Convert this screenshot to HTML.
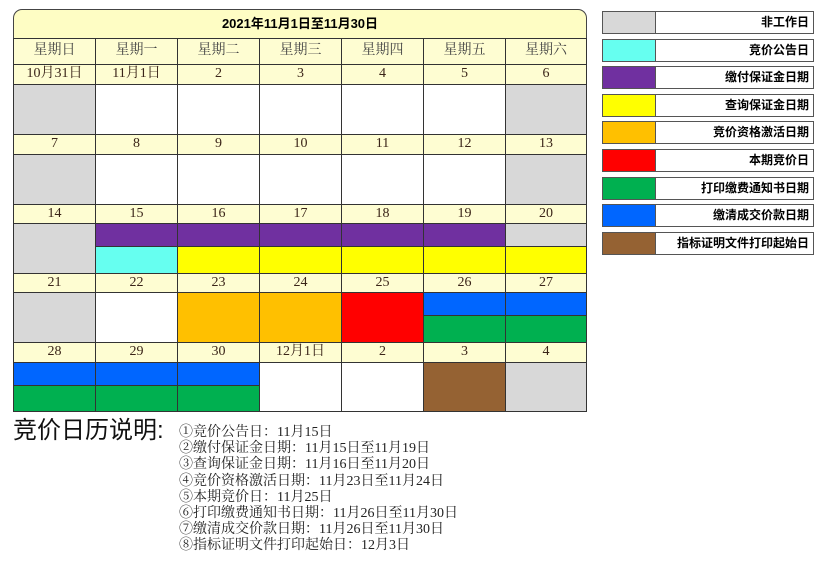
<!DOCTYPE html>
<html><head><meta charset="utf-8"><style>
body{margin:0;width:829px;height:568px;background:#fff;position:relative;overflow:hidden;font-family:"Liberation Serif","Noto Serif CJK SC",serif;}
.c{position:absolute;box-sizing:border-box;border:1px solid #333;}
.t{background:#fefdd2;text-align:center;font-size:14px;color:#3a2418;line-height:18px;}
.h{background:#fefdd2;text-align:center;font-size:14px;color:#444;line-height:24px;}
.lg{position:absolute;left:602px;width:212px;height:23px;box-sizing:border-box;border:1px solid #555;background:#fff;}
.lg .s{position:absolute;left:0;top:0;width:52px;height:21px;border-right:1px solid #555;}
.lg .n{position:absolute;right:4px;top:0;line-height:21px;font-size:12px;font-weight:bold;font-family:"Liberation Sans","Noto Sans CJK SC",sans-serif;}
.notes{position:absolute;left:179px;top:425px;font-size:14px;line-height:16.2px;color:#222;white-space:nowrap;}
</style></head><body>
<div style="position:absolute;left:13px;top:9px;width:574px;height:29px;box-sizing:border-box;border:1px solid #444;border-bottom:none;border-radius:9px 9px 0 0;background:#fefdc4;text-align:center;font:bold 13px/28px 'Liberation Sans','Noto Sans CJK SC',sans-serif;">2021年11月1日至11月30日</div>
<div class="c h" style="left:13px;top:38px;width:83px;height:27px">星期日</div>
<div class="c h" style="left:95px;top:38px;width:83px;height:27px">星期一</div>
<div class="c h" style="left:177px;top:38px;width:83px;height:27px">星期二</div>
<div class="c h" style="left:259px;top:38px;width:83px;height:27px">星期三</div>
<div class="c h" style="left:341px;top:38px;width:83px;height:27px">星期四</div>
<div class="c h" style="left:423px;top:38px;width:83px;height:27px">星期五</div>
<div class="c h" style="left:505px;top:38px;width:82px;height:27px">星期六</div>

<div class="c t" style="left:13px;top:64px;width:83px;height:21px">10月31日</div>
<div class="c t" style="left:95px;top:64px;width:83px;height:21px">11月1日</div>
<div class="c t" style="left:177px;top:64px;width:83px;height:21px">2</div>
<div class="c t" style="left:259px;top:64px;width:83px;height:21px">3</div>
<div class="c t" style="left:341px;top:64px;width:83px;height:21px">4</div>
<div class="c t" style="left:423px;top:64px;width:83px;height:21px">5</div>
<div class="c t" style="left:505px;top:64px;width:82px;height:21px">6</div>
<div class="c" style="left:13px;top:84px;width:83px;height:51px;background:#d8d8d8"></div>
<div class="c" style="left:95px;top:84px;width:83px;height:51px"></div>
<div class="c" style="left:177px;top:84px;width:83px;height:51px"></div>
<div class="c" style="left:259px;top:84px;width:83px;height:51px"></div>
<div class="c" style="left:341px;top:84px;width:83px;height:51px"></div>
<div class="c" style="left:423px;top:84px;width:83px;height:51px"></div>
<div class="c" style="left:505px;top:84px;width:82px;height:51px;background:#d8d8d8"></div>

<div class="c t" style="left:13px;top:134px;width:83px;height:21px">7</div>
<div class="c t" style="left:95px;top:134px;width:83px;height:21px">8</div>
<div class="c t" style="left:177px;top:134px;width:83px;height:21px">9</div>
<div class="c t" style="left:259px;top:134px;width:83px;height:21px">10</div>
<div class="c t" style="left:341px;top:134px;width:83px;height:21px">11</div>
<div class="c t" style="left:423px;top:134px;width:83px;height:21px">12</div>
<div class="c t" style="left:505px;top:134px;width:82px;height:21px">13</div>
<div class="c" style="left:13px;top:154px;width:83px;height:51px;background:#d8d8d8"></div>
<div class="c" style="left:95px;top:154px;width:83px;height:51px"></div>
<div class="c" style="left:177px;top:154px;width:83px;height:51px"></div>
<div class="c" style="left:259px;top:154px;width:83px;height:51px"></div>
<div class="c" style="left:341px;top:154px;width:83px;height:51px"></div>
<div class="c" style="left:423px;top:154px;width:83px;height:51px"></div>
<div class="c" style="left:505px;top:154px;width:82px;height:51px;background:#d8d8d8"></div>

<div class="c t" style="left:13px;top:204px;width:83px;height:20px">14</div>
<div class="c t" style="left:95px;top:204px;width:83px;height:20px">15</div>
<div class="c t" style="left:177px;top:204px;width:83px;height:20px">16</div>
<div class="c t" style="left:259px;top:204px;width:83px;height:20px">17</div>
<div class="c t" style="left:341px;top:204px;width:83px;height:20px">18</div>
<div class="c t" style="left:423px;top:204px;width:83px;height:20px">19</div>
<div class="c t" style="left:505px;top:204px;width:82px;height:20px">20</div>
<div class="c" style="left:13px;top:223px;width:83px;height:51px;background:#d8d8d8"></div>
<div class="c" style="left:95px;top:223px;width:83px;height:24px;background:#7030a0"></div>
<div class="c" style="left:177px;top:223px;width:83px;height:24px;background:#7030a0"></div>
<div class="c" style="left:259px;top:223px;width:83px;height:24px;background:#7030a0"></div>
<div class="c" style="left:341px;top:223px;width:83px;height:24px;background:#7030a0"></div>
<div class="c" style="left:423px;top:223px;width:83px;height:24px;background:#7030a0"></div>
<div class="c" style="left:505px;top:223px;width:82px;height:24px;background:#d8d8d8"></div>
<div class="c" style="left:95px;top:246px;width:83px;height:28px;background:#66fff0"></div>
<div class="c" style="left:177px;top:246px;width:83px;height:28px;background:#ffff00"></div>
<div class="c" style="left:259px;top:246px;width:83px;height:28px;background:#ffff00"></div>
<div class="c" style="left:341px;top:246px;width:83px;height:28px;background:#ffff00"></div>
<div class="c" style="left:423px;top:246px;width:83px;height:28px;background:#ffff00"></div>
<div class="c" style="left:505px;top:246px;width:82px;height:28px;background:#ffff00"></div>

<div class="c t" style="left:13px;top:273px;width:83px;height:20px">21</div>
<div class="c t" style="left:95px;top:273px;width:83px;height:20px">22</div>
<div class="c t" style="left:177px;top:273px;width:83px;height:20px">23</div>
<div class="c t" style="left:259px;top:273px;width:83px;height:20px">24</div>
<div class="c t" style="left:341px;top:273px;width:83px;height:20px">25</div>
<div class="c t" style="left:423px;top:273px;width:83px;height:20px">26</div>
<div class="c t" style="left:505px;top:273px;width:82px;height:20px">27</div>
<div class="c" style="left:13px;top:292px;width:83px;height:51px;background:#d8d8d8"></div>
<div class="c" style="left:95px;top:292px;width:83px;height:51px"></div>
<div class="c" style="left:177px;top:292px;width:83px;height:51px;background:#ffc000"></div>
<div class="c" style="left:259px;top:292px;width:83px;height:51px;background:#ffc000"></div>
<div class="c" style="left:341px;top:292px;width:83px;height:51px;background:#ff0000"></div>
<div class="c" style="left:423px;top:292px;width:83px;height:24px;background:#0066ff"></div>
<div class="c" style="left:505px;top:292px;width:82px;height:24px;background:#0066ff"></div>
<div class="c" style="left:423px;top:315px;width:83px;height:28px;background:#00b050"></div>
<div class="c" style="left:505px;top:315px;width:82px;height:28px;background:#00b050"></div>

<div class="c t" style="left:13px;top:342px;width:83px;height:21px">28</div>
<div class="c t" style="left:95px;top:342px;width:83px;height:21px">29</div>
<div class="c t" style="left:177px;top:342px;width:83px;height:21px">30</div>
<div class="c t" style="left:259px;top:342px;width:83px;height:21px">12月1日</div>
<div class="c t" style="left:341px;top:342px;width:83px;height:21px">2</div>
<div class="c t" style="left:423px;top:342px;width:83px;height:21px">3</div>
<div class="c t" style="left:505px;top:342px;width:82px;height:21px">4</div>
<div class="c" style="left:13px;top:362px;width:83px;height:24px;background:#0066ff"></div>
<div class="c" style="left:95px;top:362px;width:83px;height:24px;background:#0066ff"></div>
<div class="c" style="left:177px;top:362px;width:83px;height:24px;background:#0066ff"></div>
<div class="c" style="left:13px;top:385px;width:83px;height:27px;background:#00b050"></div>
<div class="c" style="left:95px;top:385px;width:83px;height:27px;background:#00b050"></div>
<div class="c" style="left:177px;top:385px;width:83px;height:27px;background:#00b050"></div>
<div class="c" style="left:259px;top:362px;width:83px;height:50px"></div>
<div class="c" style="left:341px;top:362px;width:83px;height:50px"></div>
<div class="c" style="left:423px;top:362px;width:83px;height:50px;background:#956233"></div>
<div class="c" style="left:505px;top:362px;width:82px;height:50px;background:#d8d8d8"></div>

<div class="lg" style="top:11px"><div class="s" style="background:#d8d8d8"></div><div class="n">非工作日</div></div>
<div class="lg" style="top:39px"><div class="s" style="background:#66fff0"></div><div class="n">竞价公告日</div></div>
<div class="lg" style="top:66px"><div class="s" style="background:#7030a0"></div><div class="n">缴付保证金日期</div></div>
<div class="lg" style="top:94px"><div class="s" style="background:#ffff00"></div><div class="n">查询保证金日期</div></div>
<div class="lg" style="top:121px"><div class="s" style="background:#ffc000"></div><div class="n">竞价资格激活日期</div></div>
<div class="lg" style="top:149px"><div class="s" style="background:#ff0000"></div><div class="n">本期竞价日</div></div>
<div class="lg" style="top:177px"><div class="s" style="background:#00b050"></div><div class="n">打印缴费通知书日期</div></div>
<div class="lg" style="top:204px"><div class="s" style="background:#0066ff"></div><div class="n">缴清成交价款日期</div></div>
<div class="lg" style="top:232px"><div class="s" style="background:#956233"></div><div class="n">指标证明文件打印起始日</div></div>

<div style="position:absolute;left:13px;top:416px;font:24px/30px 'Liberation Sans','Noto Sans CJK SC',sans-serif;color:#111;">竞价日历说明:</div>
<div class="notes">
①竞价公告日：11月15日<br>
②缴付保证金日期：11月15日至11月19日<br>
③查询保证金日期：11月16日至11月20日<br>
④竞价资格激活日期：11月23日至11月24日<br>
⑤本期竞价日：11月25日<br>
⑥打印缴费通知书日期：11月26日至11月30日<br>
⑦缴清成交价款日期：11月26日至11月30日<br>
⑧指标证明文件打印起始日：12月3日
</div>
</body></html>
